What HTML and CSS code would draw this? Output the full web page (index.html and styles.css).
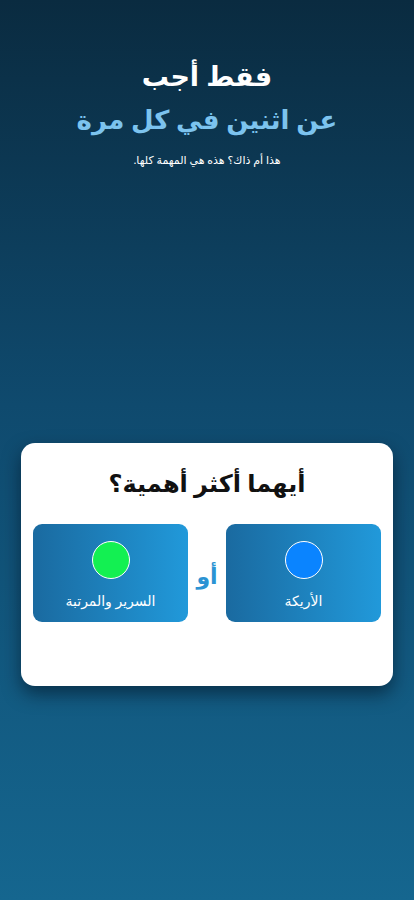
FILE: index.html
```html
<!DOCTYPE html>
<html lang="ar" dir="rtl">
<head>
<meta charset="utf-8">
<title>أيهما أكثر أهمية</title>
<link rel="stylesheet" href="styles.css">
</head>
<body>
<main class="screen">
  <header class="intro">
    <h1 class="title">فقط أجب</h1>
    <h2 class="subtitle">عن اثنين في كل مرة</h2>
    <p class="note">هذا أم ذاك؟ هذه هي المهمة كلها.</p>
  </header>
  <section class="card">
    <h3 class="question">أيهما أكثر أهمية؟</h3>
    <div class="choices">
      <button class="choice">
        <span class="dot dot-blue"></span>
        <span class="label">الأريكة</span>
      </button>
      <span class="or">أو</span>
      <button class="choice">
        <span class="dot dot-green"></span>
        <span class="label">السرير والمرتبة</span>
      </button>
    </div>
  </section>
</main>
</body>
</html>
```
FILE: styles.css
```css
* { box-sizing: border-box; }
html, body {
  margin: 0;
  padding: 0;
}
body {
  width: 414px;
  height: 900px;
  overflow: hidden;
  font-family: "Noto Sans", "DejaVu Sans", sans-serif;
  background: linear-gradient(180deg, #0a2b40 0%, #0f4a6e 45%, #15668f 100%);
}
.screen {
  display: flex;
  flex-direction: column;
  align-items: center;
  height: 900px;
}
.intro {
  text-align: center;
  padding-top: 56px;
}
.title {
  margin: 0;
  color: #ffffff;
  font-size: 27px;
  font-weight: 700;
  line-height: 40px;
}
.subtitle {
  margin: 0;
  color: #7cc3ee;
  font-size: 26px;
  font-weight: 700;
  line-height: 46px;
}
.note {
  margin: 9px 0 0;
  color: #ffffff;
  font-size: 11px;
  line-height: 18px;
}
.card {
  margin-top: 274px;
  width: 372px;
  height: 243px;
  background: #ffffff;
  border-radius: 14px;
  box-shadow: 0 8px 18px rgba(0, 15, 30, 0.55);
  padding: 22px 12px 0;
}
.question {
  margin: 0;
  text-align: center;
  color: #111111;
  font-size: 24px;
  font-weight: 700;
  line-height: 36px;
}
.choices {
  margin-top: 23px;
  display: flex;
  align-items: center;
  justify-content: space-between;
}
.choice {
  width: 155px;
  height: 98px;
  border: 0;
  border-radius: 9px;
  background: linear-gradient(90deg, #1a6aa0 0%, #2199da 100%);
  display: flex;
  flex-direction: column;
  align-items: center;
  padding: 17px 0 0;
  font-family: inherit;
  cursor: pointer;
}
.dot {
  width: 38px;
  height: 38px;
  border-radius: 50%;
  border: 1.5px solid #ffffff;
}
.dot-blue { background: #0a84ff; }
.dot-green { background: #13f052; }
.label {
  margin-top: 12px;
  color: #ffffff;
  font-size: 14px;
  line-height: 20px;
}
.or {
  color: #2b93d3;
  font-size: 22px;
  font-weight: 700;
  line-height: 30px;
  margin-top: 4px;
}
```
